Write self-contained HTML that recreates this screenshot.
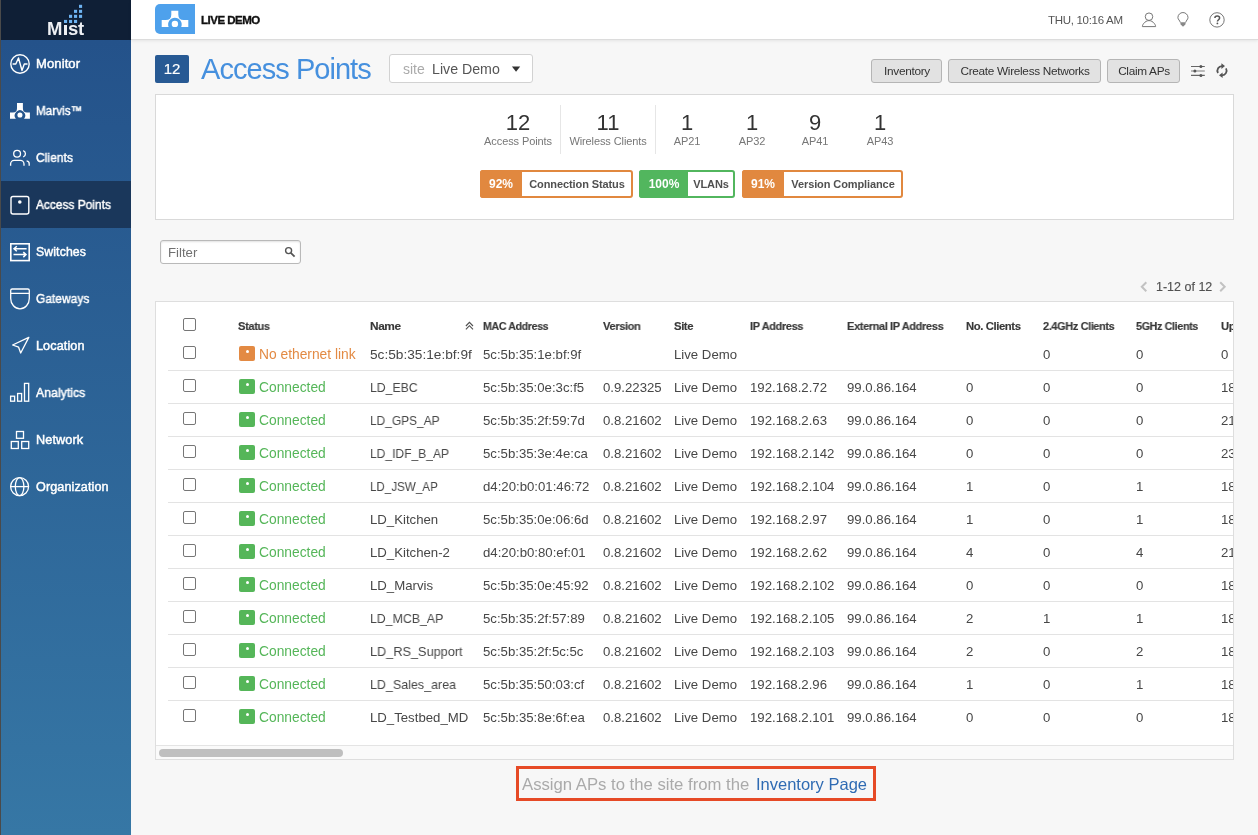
<!DOCTYPE html><html><head><meta charset="utf-8"><style>
*{box-sizing:border-box;margin:0;padding:0}
html,body{width:1258px;height:835px;overflow:hidden;font-family:"Liberation Sans",sans-serif;background:#f7f7f7;color:#333;position:relative}
.t{position:absolute;white-space:nowrap;line-height:1;will-change:transform}
.ov{position:absolute;left:0;top:0;overflow:visible}
#side{position:absolute;left:0;top:0;width:131px;height:835px;background:linear-gradient(#24528a 40px,#3677a5 835px)}
#logo{position:absolute;left:0;top:0;width:131px;height:40px;background:#0f1f36}
#edge{position:absolute;left:0;top:0;width:1px;height:835px;background:#4a4a4a}
.nav{position:absolute;left:0;width:131px}
.nav.act{background:#1a375b}
#hdr{position:absolute;left:131px;top:0;width:1127px;height:40px;background:#fff;border-bottom:1px solid #dcdcdc;box-shadow:0 1px 3px rgba(0,0,0,.08)}
.btn{position:absolute;background:#e2e2e2;border:1px solid #b5b5b5;border-radius:3px}
#tbl{position:absolute;left:155px;top:301px;width:1079px;height:459px;overflow:hidden}
.cb{position:absolute;width:13px;height:13px;border:1px solid #767676;border-radius:2px;background:#fff}
.st{position:absolute;width:16px;height:15px;border-radius:2px}
.st::after{content:"";position:absolute;left:6.5px;top:3.5px;width:3px;height:3px;border-radius:50%;background:#fff}
</style></head><body><div id="side"><div id="logo"></div>
<div class="nav act" style="top:181px;height:47px"></div>
<div class="t" style="left:36.3px;top:58px;font-size:12.3px;color:#fff;font-weight:normal;letter-spacing:0.1px;-webkit-text-stroke:0.45px #fff;transform:scaleX(1.059);transform-origin:0 0">Monitor</div>
<div class="t" style="left:36.3px;top:105px;font-size:12.3px;color:#fff;font-weight:normal;letter-spacing:0.1px;-webkit-text-stroke:0.45px #fff;transform:scaleX(0.943);transform-origin:0 0">Marvis™</div>
<div class="t" style="left:36.3px;top:152px;font-size:12.3px;color:#fff;font-weight:normal;letter-spacing:0.1px;-webkit-text-stroke:0.45px #fff;transform:scaleX(0.968);transform-origin:0 0">Clients</div>
<div class="t" style="left:36.3px;top:199px;font-size:12.3px;color:#fff;font-weight:normal;letter-spacing:0.1px;-webkit-text-stroke:0.45px #fff;transform:scaleX(0.956);transform-origin:0 0">Access Points</div>
<div class="t" style="left:36.3px;top:246px;font-size:12.3px;color:#fff;font-weight:normal;letter-spacing:0.1px;-webkit-text-stroke:0.45px #fff">Switches</div>
<div class="t" style="left:36.3px;top:293px;font-size:12.3px;color:#fff;font-weight:normal;letter-spacing:0.1px;-webkit-text-stroke:0.45px #fff;transform:scaleX(0.964);transform-origin:0 0">Gateways</div>
<div class="t" style="left:36.3px;top:340px;font-size:12.3px;color:#fff;font-weight:normal;letter-spacing:0.1px;-webkit-text-stroke:0.45px #fff;transform:scaleX(1.026);transform-origin:0 0">Location</div>
<div class="t" style="left:36.3px;top:387px;font-size:12.3px;color:#fff;font-weight:normal;letter-spacing:0.1px;-webkit-text-stroke:0.45px #fff;transform:scaleX(0.986);transform-origin:0 0">Analytics</div>
<div class="t" style="left:36.3px;top:434px;font-size:12.3px;color:#fff;font-weight:normal;letter-spacing:0.1px;-webkit-text-stroke:0.45px #fff;transform:scaleX(1.031);transform-origin:0 0">Network</div>
<div class="t" style="left:36.3px;top:481px;font-size:12.3px;color:#fff;font-weight:normal;letter-spacing:0.1px;-webkit-text-stroke:0.45px #fff;transform:scaleX(1.024);transform-origin:0 0">Organization</div>
<svg class="ov" width="131" height="835" viewBox="0 0 131 835"><circle cx="20" cy="64" r="9.2" fill="none" stroke="#fff" stroke-width="1.4"/><polyline points="12.6,64 15.8,64 18.5,58 22,70.5 24.3,64 27.5,64" fill="none" stroke="#fff" stroke-width="1.4" stroke-linejoin="round"/><path d="M10,118.7 V112.6 H13 Q17,112.6 17,108.3 V103.1 H22.9 V108.3 Q22.9,112.6 26.9,112.6 H29.9 V118.7 H24.05 A5.2,5.2 0 1 0 15.85,118.7 Z" fill="#fff"/><circle cx="19.95" cy="115" r="2.55" fill="#fff"/><circle cx="17.1" cy="153.8" r="3.4" fill="none" stroke="#fff" stroke-width="1.3"/><path d="M10.6,165.7 V164 A3.6,3.6 0 0 1 14.2,160.4 H20.4 A3.6,3.6 0 0 1 24,164 V165.7" fill="none" stroke="#fff" stroke-width="1.3"/><path d="M23.2,150.6 A3.4,3.4 0 0 1 23.2,157" fill="none" stroke="#fff" stroke-width="1.3"/><path d="M26.6,160.8 A3,3 0 0 1 29.2,164 V165.7" fill="none" stroke="#fff" stroke-width="1.3"/><rect x="11" y="196.5" width="17.8" height="17.5" rx="2" fill="none" stroke="#fff" stroke-width="1.4"/><circle cx="19.8" cy="202" r="1.8" fill="#fff"/><rect x="10.8" y="243.8" width="18.4" height="16.8" fill="none" stroke="#fff" stroke-width="1.6"/><path d="M26.6,248.8 H14 M16.8,246.3 L14,248.8 L16.8,251.3 M13.5,254.6 H26 M23.3,252.1 L26,254.6 L23.3,257.1" fill="none" stroke="#fff" stroke-width="1.5"/><path d="M10.7,290.5 A1.5,1.5 0 0 1 12.2,289 H27.8 A1.5,1.5 0 0 1 29.3,290.5 V298.5 A9.3,10.3 0 0 1 10.7,298.5 Z M10.7,293.4 H29.3" fill="none" stroke="#fff" stroke-width="1.3"/><path d="M28.8,337.4 L12.6,345 L18.6,347.2 L20.7,353 Z" fill="none" stroke="#fff" stroke-width="1.3" stroke-linejoin="round"/><rect x="10.6" y="396.2" width="4" height="5" fill="none" stroke="#fff" stroke-width="1.3"/><rect x="17.6" y="393.5" width="4" height="7.7" fill="none" stroke="#fff" stroke-width="1.3"/><rect x="24.5" y="383.4" width="4.2" height="17.8" fill="none" stroke="#fff" stroke-width="1.3"/><rect x="16.5" y="431.5" width="7" height="6.8" fill="none" stroke="#fff" stroke-width="1.3"/><rect x="11.3" y="441.5" width="7" height="7" fill="none" stroke="#fff" stroke-width="1.3"/><rect x="21.7" y="441.5" width="7" height="7" fill="none" stroke="#fff" stroke-width="1.3"/><circle cx="19.6" cy="486.6" r="9" fill="none" stroke="#fff" stroke-width="1.3"/><ellipse cx="19.6" cy="486.6" rx="4.3" ry="9" fill="none" stroke="#fff" stroke-width="1.3"/><path d="M10.6,486.6 H28.6" stroke="#fff" stroke-width="1.3"/>
<rect x="79" y="4.8" width="3.1" height="3.1" fill="#6db3f2"/>
<rect x="74" y="9.8" width="3.1" height="3.1" fill="#6db3f2"/>
<rect x="79" y="9.8" width="3.1" height="3.1" fill="#6db3f2"/>
<rect x="69" y="14.8" width="3.1" height="3.1" fill="#6db3f2"/>
<rect x="74" y="14.8" width="3.1" height="3.1" fill="#6db3f2"/>
<rect x="79" y="14.8" width="3.1" height="3.1" fill="#6db3f2"/>
<rect x="64" y="19.9" width="3.1" height="3.1" fill="#6db3f2"/>
<rect x="69" y="19.9" width="3.1" height="3.1" fill="#6db3f2"/>
<rect x="74" y="19.9" width="3.1" height="3.1" fill="#6db3f2"/>
</svg>
<div class="t" style="left:47.2px;top:20px;font-size:18.5px;color:#eef0f4;font-weight:bold;">M</div>
<div style="position:absolute;left:64px;top:24.9px;width:2.6px;height:9.8px;background:#eef0f4"></div>
<div class="t" style="left:67.6px;top:20px;font-size:18.5px;color:#eef0f4;font-weight:bold;">s</div>
<div class="t" style="left:77.6px;top:20px;font-size:18.5px;color:#eef0f4;font-weight:bold;">t</div>
</div><div id="edge"></div>
<div id="hdr"></div>
<div style="position:absolute;left:155px;top:4px;width:40px;height:30px;background:#4ea1ec;border-radius:5px 0 0 5px"></div>
<svg class="ov" width="300" height="40" viewBox="0 0 300 40"><path d="M161.7,27.1 V20.1 H165.8 Q171.3,20.1 171.3,14.4 V10.8 H178.3 V14.4 Q178.3,20.1 183.8,20.1 H188.3 V27.1 H181.18 A6.8,6.8 0 1 0 168.62,27.1 Z" fill="#fff"/><circle cx="174.9" cy="23.9" r="3.2" fill="#fff"/></svg>
<div class="t" style="left:201.4px;top:15px;font-size:11.5px;color:#111;font-weight:bold;letter-spacing:-0.5px;-webkit-text-stroke:0.35px #111">LIVE DEMO</div>
<div class="t" style="left:1048px;top:15px;font-size:11.5px;color:#555;font-weight:normal;letter-spacing:-0.3px">THU, 10:16 AM</div>
<svg class="ov" style="left:1140px;top:11px" width="90" height="18" viewBox="1140 11 90 18"><circle cx="1149" cy="16.7" r="3.75" fill="none" stroke="#777" stroke-width="1"/><path d="M1142.4,26.6 C1142,25.6 1144.6,20.6 1149,20.6 C1153.4,20.6 1156,25.6 1155.6,26.6 Z" fill="none" stroke="#777" stroke-width="1" stroke-linejoin="round"/><path d="M1180.2,22.3 C1180,20.6 1177.9,19.4 1177.9,17.6 A5.05,5.05 0 0 1 1188,17.6 C1188,19.4 1186,20.6 1185.8,22.3" fill="none" stroke="#777" stroke-width="1"/><path d="M1180.1,22.2 H1185.9 L1185.3,24.6 L1183,26.8 L1180.7,24.6 Z" fill="#888"/><circle cx="1217" cy="19.9" r="7.2" fill="none" stroke="#777" stroke-width="1"/><path d="M1214.9,18 C1214.9,16.6 1215.9,15.9 1217.2,15.9 C1218.6,15.9 1219.6,16.8 1219.6,17.9 C1219.6,19.6 1217.4,19.8 1217.4,21.6" fill="none" stroke="#555" stroke-width="1.5"/><circle cx="1217.4" cy="23.4" r="0.9" fill="#555"/></svg>
<div style="position:absolute;left:155px;top:55px;width:34px;height:28px;background:#285a94;border-radius:2px"></div>
<div class="t" style="left:22px;width:300px;text-align:center;top:61px;font-size:15px;color:#fff;font-weight:normal;-webkit-text-stroke:0.2px #fff">12</div>
<div class="t" style="left:200.5px;top:55px;font-size:29px;color:#4690de;font-weight:normal;letter-spacing:-0.95px">Access Points</div>
<div style="position:absolute;left:389px;top:54px;width:144px;height:29px;background:#fff;border:1px solid #d2d2d2;border-radius:3px"></div>
<div class="t" style="left:402.5px;top:62px;font-size:14px;color:#aaa;font-weight:normal;">site</div>
<div class="t" style="left:431.5px;top:62px;font-size:14.2px;color:#555;font-weight:normal;">Live Demo</div>
<svg class="ov" style="left:510px;top:64px" width="12" height="8"><path d="M1.9,2.5 H10.2 L6.05,7.8 Z" fill="#333"/></svg>
<div class="btn" style="left:871px;top:59px;width:71px;height:24px"></div>
<div class="t" style="left:756.5px;width:300px;text-align:center;top:66px;font-size:11.8px;color:#333;font-weight:normal;letter-spacing:-0.3px">Inventory</div>
<div class="btn" style="left:948px;top:59px;width:153px;height:24px"></div>
<div class="t" style="left:874.5px;width:300px;text-align:center;top:66px;font-size:11.8px;color:#333;font-weight:normal;letter-spacing:-0.3px">Create Wireless Networks</div>
<div class="btn" style="left:1107px;top:59px;width:73px;height:24px"></div>
<div class="t" style="left:993.5px;width:300px;text-align:center;top:66px;font-size:11.8px;color:#333;font-weight:normal;letter-spacing:-0.3px">Claim APs</div>
<svg class="ov" style="left:1188px;top:60px" width="45" height="22" viewBox="1188 60 45 22"><path d="M1191,66.5 H1204.8 M1191,75.4 H1204.8" stroke="#666" stroke-width="1.2"/><path d="M1191,71 H1204.8" stroke="#999" stroke-width="1.3"/><circle cx="1200.9" cy="66.5" r="1.5" fill="#555"/><circle cx="1194.9" cy="71" r="1.5" fill="#555"/><circle cx="1200.9" cy="75.4" r="1.5" fill="#555"/><path d="M1222.3,66.1 A4.6,4.6 0 0 0 1218.02,73.0 M1221.7,75.3 A4.6,4.6 0 0 0 1225.98,68.4" fill="none" stroke="#555" stroke-width="1.8"/><path d="M1225,66.1 L1221.4,63.3 V68.9 Z M1219,75.3 L1222.6,72.5 V78.1 Z" fill="#555"/></svg>
<div style="position:absolute;left:155px;top:94px;width:1079px;height:126px;background:#fff;border:1px solid #d9d9d9"></div>
<div class="t" style="left:368px;width:300px;text-align:center;top:112px;font-size:22px;color:#333;font-weight:normal;">12</div>
<div class="t" style="left:368px;width:300px;text-align:center;top:136px;font-size:11px;color:#777;font-weight:normal;letter-spacing:-0.1px">Access Points</div>
<div class="t" style="left:457.70000000000005px;width:300px;text-align:center;top:112px;font-size:22px;color:#333;font-weight:normal;">11</div>
<div class="t" style="left:457.70000000000005px;width:300px;text-align:center;top:136px;font-size:11px;color:#777;font-weight:normal;letter-spacing:-0.1px">Wireless Clients</div>
<div class="t" style="left:537px;width:300px;text-align:center;top:112px;font-size:22px;color:#333;font-weight:normal;">1</div>
<div class="t" style="left:537px;width:300px;text-align:center;top:136px;font-size:11px;color:#777;font-weight:normal;letter-spacing:-0.1px">AP21</div>
<div class="t" style="left:601.8px;width:300px;text-align:center;top:112px;font-size:22px;color:#333;font-weight:normal;">1</div>
<div class="t" style="left:601.8px;width:300px;text-align:center;top:136px;font-size:11px;color:#777;font-weight:normal;letter-spacing:-0.1px">AP32</div>
<div class="t" style="left:665.4px;width:300px;text-align:center;top:112px;font-size:22px;color:#333;font-weight:normal;">9</div>
<div class="t" style="left:665.4px;width:300px;text-align:center;top:136px;font-size:11px;color:#777;font-weight:normal;letter-spacing:-0.1px">AP41</div>
<div class="t" style="left:729.7px;width:300px;text-align:center;top:112px;font-size:22px;color:#333;font-weight:normal;">1</div>
<div class="t" style="left:729.7px;width:300px;text-align:center;top:136px;font-size:11px;color:#777;font-weight:normal;letter-spacing:-0.1px">AP43</div>
<div style="position:absolute;left:560px;top:105px;width:1px;height:49px;background:#e6e6e6"></div>
<div style="position:absolute;left:655px;top:105px;width:1px;height:49px;background:#e6e6e6"></div>
<div style="position:absolute;left:480px;top:170px;width:153px;height:28px;background:#fff;border:2px solid #e1883f;border-radius:3px"></div>
<div style="position:absolute;left:480px;top:170px;width:41.5px;height:28px;background:#e1883f;border-radius:3px 0 0 3px"></div>
<div class="t" style="left:350.75px;width:300px;text-align:center;top:178px;font-size:12px;color:#fff;font-weight:bold;">92%</div>
<div class="t" style="left:426.75px;width:300px;text-align:center;top:179px;font-size:11px;color:#505050;font-weight:bold;letter-spacing:-0.1px">Connection Status</div>
<div style="position:absolute;left:639px;top:170px;width:96px;height:28px;background:#fff;border:2px solid #52b65e;border-radius:3px"></div>
<div style="position:absolute;left:639px;top:170px;width:49px;height:28px;background:#52b65e;border-radius:3px 0 0 3px"></div>
<div class="t" style="left:513.5px;width:300px;text-align:center;top:178px;font-size:12px;color:#fff;font-weight:bold;">100%</div>
<div class="t" style="left:561.0px;width:300px;text-align:center;top:179px;font-size:11px;color:#505050;font-weight:bold;letter-spacing:-0.1px">VLANs</div>
<div style="position:absolute;left:742px;top:170px;width:161px;height:28px;background:#fff;border:2px solid #e1883f;border-radius:3px"></div>
<div style="position:absolute;left:742px;top:170px;width:41.5px;height:28px;background:#e1883f;border-radius:3px 0 0 3px"></div>
<div class="t" style="left:612.75px;width:300px;text-align:center;top:178px;font-size:12px;color:#fff;font-weight:bold;">91%</div>
<div class="t" style="left:692.75px;width:300px;text-align:center;top:179px;font-size:11px;color:#505050;font-weight:bold;letter-spacing:-0.1px">Version Compliance</div>
<div style="position:absolute;left:160px;top:240px;width:141px;height:24px;background:#fff;border:1px solid #b9b9b9;border-radius:3px;box-shadow:inset 0 1px 2px rgba(0,0,0,.12)"></div>
<div class="t" style="left:167.5px;top:246px;font-size:13.2px;color:#707070;font-weight:normal;">Filter</div>
<svg class="ov" style="left:280px;top:242px" width="20" height="20" viewBox="280 242 20 20"><circle cx="288.6" cy="250.6" r="3" fill="none" stroke="#555" stroke-width="1.4"/><path d="M290.8,252.8 L294.6,256.6" stroke="#555" stroke-width="1.8"/></svg>
<svg class="ov" style="left:1135px;top:278px" width="100" height="18" viewBox="1135 278 100 18"><path d="M1146.3,282.3 L1141.8,286.8 L1146.3,291.3" fill="none" stroke="#c2c2c2" stroke-width="2"/><path d="M1220.2,282.3 L1224.7,286.8 L1220.2,291.3" fill="none" stroke="#c2c2c2" stroke-width="2"/></svg>
<div class="t" style="left:1156px;top:281px;font-size:12.5px;color:#505050;font-weight:normal;-webkit-text-stroke:0.15px #505050">1-12 of 12</div>
<div id="tbl">
<div style="position:absolute;left:0;top:0;width:1079px;height:459px;background:#fff;border:1px solid #dedede"></div>
<div class="t" style="left:83px;top:20px;font-size:11.3px;color:#383838;font-weight:bold;letter-spacing:-0.4px;-webkit-text-stroke:0.15px #383838;transform:scaleX(0.984);transform-origin:0 0">Status</div>
<div class="t" style="left:215px;top:20px;font-size:11.3px;color:#383838;font-weight:bold;letter-spacing:-0.4px;-webkit-text-stroke:0.15px #383838;transform:scaleX(1.050);transform-origin:0 0">Name</div>
<div class="t" style="left:328px;top:20px;font-size:11.3px;color:#383838;font-weight:bold;letter-spacing:-0.4px;-webkit-text-stroke:0.15px #383838;transform:scaleX(0.943);transform-origin:0 0">MAC Address</div>
<div class="t" style="left:448px;top:20px;font-size:11.3px;color:#383838;font-weight:bold;letter-spacing:-0.4px;-webkit-text-stroke:0.15px #383838;transform:scaleX(0.984);transform-origin:0 0">Version</div>
<div class="t" style="left:519px;top:20px;font-size:11.3px;color:#383838;font-weight:bold;letter-spacing:-0.4px;-webkit-text-stroke:0.15px #383838">Site</div>
<div class="t" style="left:595px;top:20px;font-size:11.3px;color:#383838;font-weight:bold;letter-spacing:-0.4px;-webkit-text-stroke:0.15px #383838;transform:scaleX(0.974);transform-origin:0 0">IP Address</div>
<div class="t" style="left:692px;top:20px;font-size:11.3px;color:#383838;font-weight:bold;letter-spacing:-0.4px;-webkit-text-stroke:0.15px #383838;transform:scaleX(0.977);transform-origin:0 0">External IP Address</div>
<div class="t" style="left:811px;top:20px;font-size:11.3px;color:#383838;font-weight:bold;letter-spacing:-0.4px;-webkit-text-stroke:0.15px #383838">No. Clients</div>
<div class="t" style="left:888px;top:20px;font-size:11.3px;color:#383838;font-weight:bold;letter-spacing:-0.4px;-webkit-text-stroke:0.15px #383838;transform:scaleX(0.971);transform-origin:0 0">2.4GHz Clients</div>
<div class="t" style="left:981px;top:20px;font-size:11.3px;color:#383838;font-weight:bold;letter-spacing:-0.4px;-webkit-text-stroke:0.15px #383838;transform:scaleX(0.954);transform-origin:0 0">5GHz Clients</div>
<div class="t" style="left:1066px;top:20px;font-size:11.3px;color:#383838;font-weight:bold;letter-spacing:-0.4px;-webkit-text-stroke:0.15px #383838">Uptime</div>
<svg class="ov" style="left:307px;top:17px" width="14" height="14"><path d="M3.9,8 L7.45,4.4 L11,8 M3.9,11.3 L7.45,7.7 L11,11.3" fill="none" stroke="#505050" stroke-width="1.15"/></svg>
<div class="cb" style="left:28px;top:17px"></div>
<div class="cb" style="left:28px;top:45px"></div>
<div class="st" style="left:84px;top:45px;background:#e38a43"></div>
<div class="t" style="left:104px;top:47px;font-size:13.8px;color:#e38a43;font-weight:normal;">No ethernet link</div>
<div class="t" style="left:215px;top:47px;font-size:13.2px;color:#474747;font-weight:normal;transform:scaleX(1.036);transform-origin:0 0">5c:5b:35:1e:bf:9f</div>
<div class="t" style="left:328px;top:47px;font-size:13.2px;color:#474747;font-weight:normal;">5c:5b:35:1e:bf:9f</div>
<div class="t" style="left:519px;top:47px;font-size:13.2px;color:#474747;font-weight:normal;">Live Demo</div>
<div class="t" style="left:888px;top:47px;font-size:13.2px;color:#474747;font-weight:normal;">0</div>
<div class="t" style="left:981px;top:47px;font-size:13.2px;color:#474747;font-weight:normal;">0</div>
<div class="t" style="left:1066px;top:47px;font-size:13.2px;color:#474747;font-weight:normal;">0</div>
<div style="position:absolute;left:13px;top:69px;width:1100px;height:1px;background:#e3e3e3"></div>
<div class="cb" style="left:28px;top:78px"></div>
<div class="st" style="left:84px;top:78px;background:#55b659"></div>
<div class="t" style="left:104px;top:80px;font-size:13.8px;color:#55b659;font-weight:normal;">Connected</div>
<div class="t" style="left:215px;top:80px;font-size:13.2px;color:#474747;font-weight:normal;transform:scaleX(0.929);transform-origin:0 0">LD_EBC</div>
<div class="t" style="left:328px;top:80px;font-size:13.2px;color:#474747;font-weight:normal;">5c:5b:35:0e:3c:f5</div>
<div class="t" style="left:448px;top:80px;font-size:13.2px;color:#474747;font-weight:normal;">0.9.22325</div>
<div class="t" style="left:519px;top:80px;font-size:13.2px;color:#474747;font-weight:normal;">Live Demo</div>
<div class="t" style="left:595px;top:80px;font-size:13.2px;color:#474747;font-weight:normal;">192.168.2.72</div>
<div class="t" style="left:692px;top:80px;font-size:13.2px;color:#474747;font-weight:normal;">99.0.86.164</div>
<div class="t" style="left:811px;top:80px;font-size:13.2px;color:#474747;font-weight:normal;">0</div>
<div class="t" style="left:888px;top:80px;font-size:13.2px;color:#474747;font-weight:normal;">0</div>
<div class="t" style="left:981px;top:80px;font-size:13.2px;color:#474747;font-weight:normal;">0</div>
<div class="t" style="left:1066px;top:80px;font-size:13.2px;color:#474747;font-weight:normal;">18</div>
<div style="position:absolute;left:13px;top:102px;width:1100px;height:1px;background:#e3e3e3"></div>
<div class="cb" style="left:28px;top:111px"></div>
<div class="st" style="left:84px;top:111px;background:#55b659"></div>
<div class="t" style="left:104px;top:113px;font-size:13.8px;color:#55b659;font-weight:normal;">Connected</div>
<div class="t" style="left:215px;top:113px;font-size:13.2px;color:#474747;font-weight:normal;transform:scaleX(0.903);transform-origin:0 0">LD_GPS_AP</div>
<div class="t" style="left:328px;top:113px;font-size:13.2px;color:#474747;font-weight:normal;">5c:5b:35:2f:59:7d</div>
<div class="t" style="left:448px;top:113px;font-size:13.2px;color:#474747;font-weight:normal;">0.8.21602</div>
<div class="t" style="left:519px;top:113px;font-size:13.2px;color:#474747;font-weight:normal;">Live Demo</div>
<div class="t" style="left:595px;top:113px;font-size:13.2px;color:#474747;font-weight:normal;">192.168.2.63</div>
<div class="t" style="left:692px;top:113px;font-size:13.2px;color:#474747;font-weight:normal;">99.0.86.164</div>
<div class="t" style="left:811px;top:113px;font-size:13.2px;color:#474747;font-weight:normal;">0</div>
<div class="t" style="left:888px;top:113px;font-size:13.2px;color:#474747;font-weight:normal;">0</div>
<div class="t" style="left:981px;top:113px;font-size:13.2px;color:#474747;font-weight:normal;">0</div>
<div class="t" style="left:1066px;top:113px;font-size:13.2px;color:#474747;font-weight:normal;">21</div>
<div style="position:absolute;left:13px;top:135px;width:1100px;height:1px;background:#e3e3e3"></div>
<div class="cb" style="left:28px;top:144px"></div>
<div class="st" style="left:84px;top:144px;background:#55b659"></div>
<div class="t" style="left:104px;top:146px;font-size:13.8px;color:#55b659;font-weight:normal;">Connected</div>
<div class="t" style="left:215px;top:146px;font-size:13.2px;color:#474747;font-weight:normal;transform:scaleX(0.913);transform-origin:0 0">LD_IDF_B_AP</div>
<div class="t" style="left:328px;top:146px;font-size:13.2px;color:#474747;font-weight:normal;">5c:5b:35:3e:4e:ca</div>
<div class="t" style="left:448px;top:146px;font-size:13.2px;color:#474747;font-weight:normal;">0.8.21602</div>
<div class="t" style="left:519px;top:146px;font-size:13.2px;color:#474747;font-weight:normal;">Live Demo</div>
<div class="t" style="left:595px;top:146px;font-size:13.2px;color:#474747;font-weight:normal;">192.168.2.142</div>
<div class="t" style="left:692px;top:146px;font-size:13.2px;color:#474747;font-weight:normal;">99.0.86.164</div>
<div class="t" style="left:811px;top:146px;font-size:13.2px;color:#474747;font-weight:normal;">0</div>
<div class="t" style="left:888px;top:146px;font-size:13.2px;color:#474747;font-weight:normal;">0</div>
<div class="t" style="left:981px;top:146px;font-size:13.2px;color:#474747;font-weight:normal;">0</div>
<div class="t" style="left:1066px;top:146px;font-size:13.2px;color:#474747;font-weight:normal;">23</div>
<div style="position:absolute;left:13px;top:168px;width:1100px;height:1px;background:#e3e3e3"></div>
<div class="cb" style="left:28px;top:177px"></div>
<div class="st" style="left:84px;top:177px;background:#55b659"></div>
<div class="t" style="left:104px;top:179px;font-size:13.8px;color:#55b659;font-weight:normal;">Connected</div>
<div class="t" style="left:215px;top:179px;font-size:13.2px;color:#474747;font-weight:normal;transform:scaleX(0.881);transform-origin:0 0">LD_JSW_AP</div>
<div class="t" style="left:328px;top:179px;font-size:13.2px;color:#474747;font-weight:normal;">d4:20:b0:01:46:72</div>
<div class="t" style="left:448px;top:179px;font-size:13.2px;color:#474747;font-weight:normal;">0.8.21602</div>
<div class="t" style="left:519px;top:179px;font-size:13.2px;color:#474747;font-weight:normal;">Live Demo</div>
<div class="t" style="left:595px;top:179px;font-size:13.2px;color:#474747;font-weight:normal;">192.168.2.104</div>
<div class="t" style="left:692px;top:179px;font-size:13.2px;color:#474747;font-weight:normal;">99.0.86.164</div>
<div class="t" style="left:811px;top:179px;font-size:13.2px;color:#474747;font-weight:normal;">1</div>
<div class="t" style="left:888px;top:179px;font-size:13.2px;color:#474747;font-weight:normal;">0</div>
<div class="t" style="left:981px;top:179px;font-size:13.2px;color:#474747;font-weight:normal;">1</div>
<div class="t" style="left:1066px;top:179px;font-size:13.2px;color:#474747;font-weight:normal;">18</div>
<div style="position:absolute;left:13px;top:201px;width:1100px;height:1px;background:#e3e3e3"></div>
<div class="cb" style="left:28px;top:210px"></div>
<div class="st" style="left:84px;top:210px;background:#55b659"></div>
<div class="t" style="left:104px;top:212px;font-size:13.8px;color:#55b659;font-weight:normal;">Connected</div>
<div class="t" style="left:215px;top:212px;font-size:13.2px;color:#474747;font-weight:normal;">LD_Kitchen</div>
<div class="t" style="left:328px;top:212px;font-size:13.2px;color:#474747;font-weight:normal;">5c:5b:35:0e:06:6d</div>
<div class="t" style="left:448px;top:212px;font-size:13.2px;color:#474747;font-weight:normal;">0.8.21602</div>
<div class="t" style="left:519px;top:212px;font-size:13.2px;color:#474747;font-weight:normal;">Live Demo</div>
<div class="t" style="left:595px;top:212px;font-size:13.2px;color:#474747;font-weight:normal;">192.168.2.97</div>
<div class="t" style="left:692px;top:212px;font-size:13.2px;color:#474747;font-weight:normal;">99.0.86.164</div>
<div class="t" style="left:811px;top:212px;font-size:13.2px;color:#474747;font-weight:normal;">1</div>
<div class="t" style="left:888px;top:212px;font-size:13.2px;color:#474747;font-weight:normal;">0</div>
<div class="t" style="left:981px;top:212px;font-size:13.2px;color:#474747;font-weight:normal;">1</div>
<div class="t" style="left:1066px;top:212px;font-size:13.2px;color:#474747;font-weight:normal;">18</div>
<div style="position:absolute;left:13px;top:234px;width:1100px;height:1px;background:#e3e3e3"></div>
<div class="cb" style="left:28px;top:243px"></div>
<div class="st" style="left:84px;top:243px;background:#55b659"></div>
<div class="t" style="left:104px;top:245px;font-size:13.8px;color:#55b659;font-weight:normal;">Connected</div>
<div class="t" style="left:215px;top:245px;font-size:13.2px;color:#474747;font-weight:normal;">LD_Kitchen-2</div>
<div class="t" style="left:328px;top:245px;font-size:13.2px;color:#474747;font-weight:normal;">d4:20:b0:80:ef:01</div>
<div class="t" style="left:448px;top:245px;font-size:13.2px;color:#474747;font-weight:normal;">0.8.21602</div>
<div class="t" style="left:519px;top:245px;font-size:13.2px;color:#474747;font-weight:normal;">Live Demo</div>
<div class="t" style="left:595px;top:245px;font-size:13.2px;color:#474747;font-weight:normal;">192.168.2.62</div>
<div class="t" style="left:692px;top:245px;font-size:13.2px;color:#474747;font-weight:normal;">99.0.86.164</div>
<div class="t" style="left:811px;top:245px;font-size:13.2px;color:#474747;font-weight:normal;">4</div>
<div class="t" style="left:888px;top:245px;font-size:13.2px;color:#474747;font-weight:normal;">0</div>
<div class="t" style="left:981px;top:245px;font-size:13.2px;color:#474747;font-weight:normal;">4</div>
<div class="t" style="left:1066px;top:245px;font-size:13.2px;color:#474747;font-weight:normal;">21</div>
<div style="position:absolute;left:13px;top:267px;width:1100px;height:1px;background:#e3e3e3"></div>
<div class="cb" style="left:28px;top:276px"></div>
<div class="st" style="left:84px;top:276px;background:#55b659"></div>
<div class="t" style="left:104px;top:278px;font-size:13.8px;color:#55b659;font-weight:normal;">Connected</div>
<div class="t" style="left:215px;top:278px;font-size:13.2px;color:#474747;font-weight:normal;">LD_Marvis</div>
<div class="t" style="left:328px;top:278px;font-size:13.2px;color:#474747;font-weight:normal;">5c:5b:35:0e:45:92</div>
<div class="t" style="left:448px;top:278px;font-size:13.2px;color:#474747;font-weight:normal;">0.8.21602</div>
<div class="t" style="left:519px;top:278px;font-size:13.2px;color:#474747;font-weight:normal;">Live Demo</div>
<div class="t" style="left:595px;top:278px;font-size:13.2px;color:#474747;font-weight:normal;">192.168.2.102</div>
<div class="t" style="left:692px;top:278px;font-size:13.2px;color:#474747;font-weight:normal;">99.0.86.164</div>
<div class="t" style="left:811px;top:278px;font-size:13.2px;color:#474747;font-weight:normal;">0</div>
<div class="t" style="left:888px;top:278px;font-size:13.2px;color:#474747;font-weight:normal;">0</div>
<div class="t" style="left:981px;top:278px;font-size:13.2px;color:#474747;font-weight:normal;">0</div>
<div class="t" style="left:1066px;top:278px;font-size:13.2px;color:#474747;font-weight:normal;">18</div>
<div style="position:absolute;left:13px;top:300px;width:1100px;height:1px;background:#e3e3e3"></div>
<div class="cb" style="left:28px;top:309px"></div>
<div class="st" style="left:84px;top:309px;background:#55b659"></div>
<div class="t" style="left:104px;top:311px;font-size:13.8px;color:#55b659;font-weight:normal;">Connected</div>
<div class="t" style="left:215px;top:311px;font-size:13.2px;color:#474747;font-weight:normal;transform:scaleX(0.934);transform-origin:0 0">LD_MCB_AP</div>
<div class="t" style="left:328px;top:311px;font-size:13.2px;color:#474747;font-weight:normal;">5c:5b:35:2f:57:89</div>
<div class="t" style="left:448px;top:311px;font-size:13.2px;color:#474747;font-weight:normal;">0.8.21602</div>
<div class="t" style="left:519px;top:311px;font-size:13.2px;color:#474747;font-weight:normal;">Live Demo</div>
<div class="t" style="left:595px;top:311px;font-size:13.2px;color:#474747;font-weight:normal;">192.168.2.105</div>
<div class="t" style="left:692px;top:311px;font-size:13.2px;color:#474747;font-weight:normal;">99.0.86.164</div>
<div class="t" style="left:811px;top:311px;font-size:13.2px;color:#474747;font-weight:normal;">2</div>
<div class="t" style="left:888px;top:311px;font-size:13.2px;color:#474747;font-weight:normal;">1</div>
<div class="t" style="left:981px;top:311px;font-size:13.2px;color:#474747;font-weight:normal;">1</div>
<div class="t" style="left:1066px;top:311px;font-size:13.2px;color:#474747;font-weight:normal;">18</div>
<div style="position:absolute;left:13px;top:333px;width:1100px;height:1px;background:#e3e3e3"></div>
<div class="cb" style="left:28px;top:342px"></div>
<div class="st" style="left:84px;top:342px;background:#55b659"></div>
<div class="t" style="left:104px;top:344px;font-size:13.8px;color:#55b659;font-weight:normal;">Connected</div>
<div class="t" style="left:215px;top:344px;font-size:13.2px;color:#474747;font-weight:normal;transform:scaleX(0.964);transform-origin:0 0">LD_RS_Support</div>
<div class="t" style="left:328px;top:344px;font-size:13.2px;color:#474747;font-weight:normal;">5c:5b:35:2f:5c:5c</div>
<div class="t" style="left:448px;top:344px;font-size:13.2px;color:#474747;font-weight:normal;">0.8.21602</div>
<div class="t" style="left:519px;top:344px;font-size:13.2px;color:#474747;font-weight:normal;">Live Demo</div>
<div class="t" style="left:595px;top:344px;font-size:13.2px;color:#474747;font-weight:normal;">192.168.2.103</div>
<div class="t" style="left:692px;top:344px;font-size:13.2px;color:#474747;font-weight:normal;">99.0.86.164</div>
<div class="t" style="left:811px;top:344px;font-size:13.2px;color:#474747;font-weight:normal;">2</div>
<div class="t" style="left:888px;top:344px;font-size:13.2px;color:#474747;font-weight:normal;">0</div>
<div class="t" style="left:981px;top:344px;font-size:13.2px;color:#474747;font-weight:normal;">2</div>
<div class="t" style="left:1066px;top:344px;font-size:13.2px;color:#474747;font-weight:normal;">18</div>
<div style="position:absolute;left:13px;top:366px;width:1100px;height:1px;background:#e3e3e3"></div>
<div class="cb" style="left:28px;top:375px"></div>
<div class="st" style="left:84px;top:375px;background:#55b659"></div>
<div class="t" style="left:104px;top:377px;font-size:13.8px;color:#55b659;font-weight:normal;">Connected</div>
<div class="t" style="left:215px;top:377px;font-size:13.2px;color:#474747;font-weight:normal;transform:scaleX(0.947);transform-origin:0 0">LD_Sales_area</div>
<div class="t" style="left:328px;top:377px;font-size:13.2px;color:#474747;font-weight:normal;">5c:5b:35:50:03:cf</div>
<div class="t" style="left:448px;top:377px;font-size:13.2px;color:#474747;font-weight:normal;">0.8.21602</div>
<div class="t" style="left:519px;top:377px;font-size:13.2px;color:#474747;font-weight:normal;">Live Demo</div>
<div class="t" style="left:595px;top:377px;font-size:13.2px;color:#474747;font-weight:normal;">192.168.2.96</div>
<div class="t" style="left:692px;top:377px;font-size:13.2px;color:#474747;font-weight:normal;">99.0.86.164</div>
<div class="t" style="left:811px;top:377px;font-size:13.2px;color:#474747;font-weight:normal;">1</div>
<div class="t" style="left:888px;top:377px;font-size:13.2px;color:#474747;font-weight:normal;">0</div>
<div class="t" style="left:981px;top:377px;font-size:13.2px;color:#474747;font-weight:normal;">1</div>
<div class="t" style="left:1066px;top:377px;font-size:13.2px;color:#474747;font-weight:normal;">18</div>
<div style="position:absolute;left:13px;top:399px;width:1100px;height:1px;background:#e3e3e3"></div>
<div class="cb" style="left:28px;top:408px"></div>
<div class="st" style="left:84px;top:408px;background:#55b659"></div>
<div class="t" style="left:104px;top:410px;font-size:13.8px;color:#55b659;font-weight:normal;">Connected</div>
<div class="t" style="left:215px;top:410px;font-size:13.2px;color:#474747;font-weight:normal;">LD_Testbed_MD</div>
<div class="t" style="left:328px;top:410px;font-size:13.2px;color:#474747;font-weight:normal;">5c:5b:35:8e:6f:ea</div>
<div class="t" style="left:448px;top:410px;font-size:13.2px;color:#474747;font-weight:normal;">0.8.21602</div>
<div class="t" style="left:519px;top:410px;font-size:13.2px;color:#474747;font-weight:normal;">Live Demo</div>
<div class="t" style="left:595px;top:410px;font-size:13.2px;color:#474747;font-weight:normal;">192.168.2.101</div>
<div class="t" style="left:692px;top:410px;font-size:13.2px;color:#474747;font-weight:normal;">99.0.86.164</div>
<div class="t" style="left:811px;top:410px;font-size:13.2px;color:#474747;font-weight:normal;">0</div>
<div class="t" style="left:888px;top:410px;font-size:13.2px;color:#474747;font-weight:normal;">0</div>
<div class="t" style="left:981px;top:410px;font-size:13.2px;color:#474747;font-weight:normal;">0</div>
<div class="t" style="left:1066px;top:410px;font-size:13.2px;color:#474747;font-weight:normal;">18</div>
<div style="position:absolute;left:1px;top:444px;width:1077px;height:14px;background:#fafafa;border-top:1px solid #e4e4e4"></div>
<div style="position:absolute;left:4px;top:448px;width:184px;height:8px;background:#bfbfbf;border-radius:4px"></div>
<div style="position:absolute;left:1078px;top:0;width:1px;height:459px;background:#dedede"></div>
</div>
<div style="position:absolute;left:516px;top:766px;width:360px;height:35px;border:3px solid #e64a26"></div>
<div class="t" style="left:522px;top:777px;font-size:16.7px;color:#aaa;font-weight:normal;">Assign APs to the site from the</div>
<div class="t" style="left:755.5px;top:776px;font-size:16.5px;color:#2f6bb3;font-weight:normal;">Inventory Page</div></body></html>
